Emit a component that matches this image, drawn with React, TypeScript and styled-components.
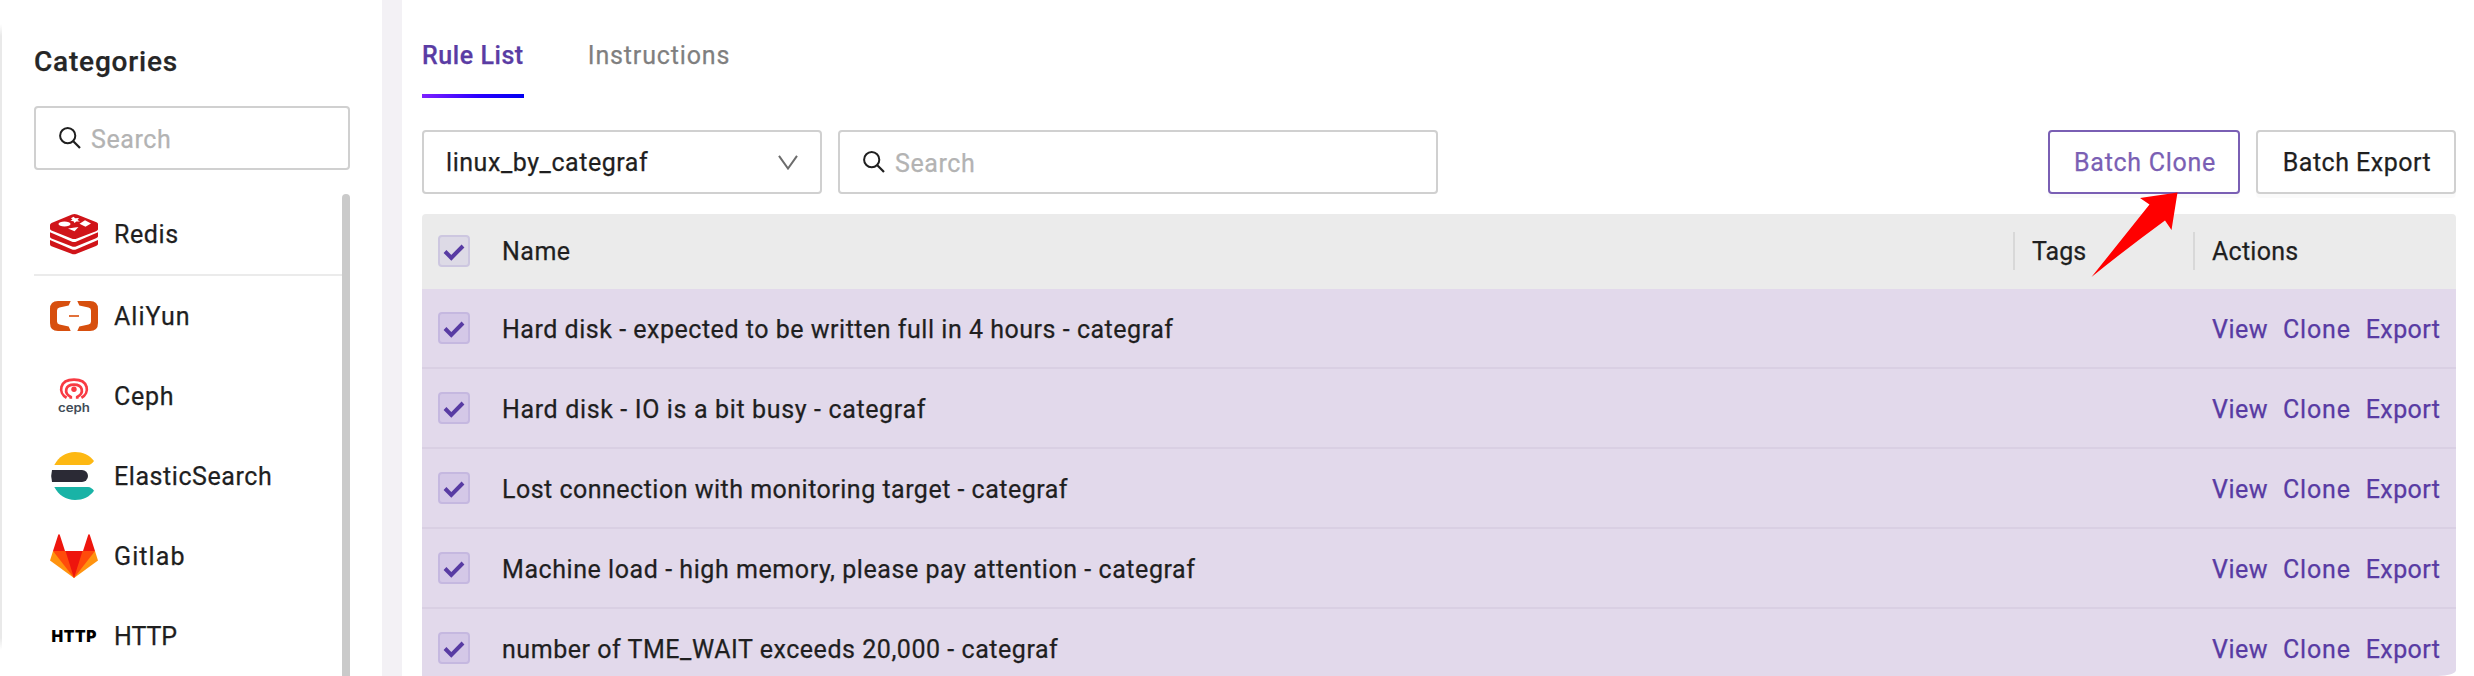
import React from 'react';
import styled, { createGlobalStyle } from 'styled-components';

const Global = createGlobalStyle`
  * { box-sizing: border-box; }
  html, body { margin: 0; background: #fff; }
  body { overflow: hidden; font-family: Roboto, "Liberation Sans", sans-serif; font-size: 25px; line-height: 34px; color: #1f1f1f; }
  svg { display: block; }
`;

const Page = styled.div`
  display: flex;
  height: 676px;
  overflow: hidden;
  background: #fff;
`;

const EdgeLine = styled.div`
  width: 2px;
  height: 626px;
  margin-top: 24px;
  flex: none;
  background: linear-gradient(to bottom, transparent, #e9e9e9 12px, #e9e9e9 calc(100% - 12px), transparent);
`;

const Sidebar = styled.aside`
  width: 380px;
  flex: none;
  padding: 45px 32px 0;
`;

const Gutter = styled.div`
  width: 20px;
  flex: none;
  background: #f3f1f5;
`;

const Text = styled.span<{ $ls?: number }>`
  white-space: pre;
  letter-spacing: ${p => p.$ls ?? 0}px;
  -webkit-text-stroke: 0.25px currentColor;
`;

const Title = styled.h2`
  margin: 0 0 27px;
  font-size: 28px;
  line-height: 34px;
  font-weight: 500;
  color: #262626;
`;

const Field = styled.div<{ $width: number }>`
  display: flex;
  align-items: center;
  gap: 10px;
  width: ${p => p.$width}px;
  height: 64px;
  padding: 3px 20px 0 23px;
  border: 2px solid #d0d0d0;
  border-radius: 4px;
  color: #b3b3b3;
`;

const SearchGlyph = styled.svg`
  width: 22px;
  height: 22px;
  flex: none;
  margin-top: -4px;
`;

const ScrollArea = styled.div`
  display: flex;
  height: 600px;
  margin-top: 24px;
`;

const CategoryList = styled.div`
  flex: 1;
`;

const Thumb = styled.div`
  width: 8px;
  flex: none;
  border-radius: 4px;
  background: #cacaca;
`;

const Category = styled.div<{ $pinned?: boolean }>`
  display: flex;
  align-items: center;
  gap: 16px;
  height: ${p => (p.$pinned ? 82 : 81)}px;
  padding-left: 16px;
  border-bottom: ${p => (p.$pinned ? '2px solid #ebebeb' : 'none')};
  & + & { height: ${p => (p.$pinned ? 82 : 80)}px; }
  svg { width: 48px; height: 48px; flex: none; }
`;

const CategoryName = styled(Text)`
  padding-top: 2px;
`;

const Main = styled.main`
  flex: 1;
  padding: 0 18px 0 20px;
`;

const Tabs = styled.nav`
  display: flex;
  gap: 64px;
  height: 98px;
`;

const Tab = styled.div<{ $active?: boolean }>`
  padding-top: 39px;
  color: ${p => (p.$active ? '#5a3ca4' : '#7f7f7f')};
  font-weight: ${p => (p.$active ? 500 : 400)};
  border-bottom: 4px solid transparent;
  border-image: ${p => (p.$active ? 'linear-gradient(to right, #8022ff, #2a00ff 55%, #0000f0) 1' : 'none')};
`;

const Toolbar = styled.div`
  display: flex;
  gap: 16px;
  margin: 32px 0 20px;
`;

const Select = styled.div`
  display: flex;
  align-items: center;
  justify-content: space-between;
  width: 400px;
  height: 64px;
  padding: 2px 22px 0 22px;
  border: 2px solid #d0d0d0;
  border-radius: 4px;
`;

const Chevron = styled.svg`
  width: 20px;
  height: 15px;
  margin-top: -2px;
`;

const Buttons = styled.div`
  display: flex;
  gap: 16px;
  margin-left: auto;
`;

const Button = styled.div<{ $focus?: boolean; $width: number }>`
  position: relative;
  display: flex;
  align-items: center;
  justify-content: center;
  width: ${p => p.$width}px;
  height: 64px;
  padding: 2px 0 0 2px;
  border: 2px solid ${p => (p.$focus ? '#7a5fb4' : '#d0d0d0')};
  border-radius: 4px;
  color: ${p => (p.$focus ? '#7a5fb4' : '#1f1f1f')};
  background: #fff;
  box-shadow: 0 4px 0 rgba(0, 0, 0, 0.02);
`;

const Arrow = styled.svg`
  position: absolute;
  z-index: 2;
  left: 41px;
  top: 60px;
  width: 88px;
  height: 87px;
`;

const Table = styled.div`
  border-radius: 4px 4px 0 0;
  overflow: hidden;
`;

const Row = styled.div<{ $head?: boolean; $last?: boolean }>`
  display: grid;
  grid-template-columns: 80px 1fr 180px 263px;
  align-items: start;
  height: ${p => (p.$head ? 75 : p.$last ? 67 : 80)}px;
  background: ${p => (p.$head ? '#ebebeb' : '#e2d9eb')};
  border-bottom: ${p => (p.$head || p.$last ? 'none' : '2px solid #d9cfe3')};
  border-bottom-right-radius: ${p => (p.$last ? '18px 6px' : '0')};
`;

const Cell = styled.div<{ $head?: boolean }>`
  padding-top: ${p => (p.$head ? 21 : 24)}px;
`;

const HeadCell = styled.div`
  height: 38px;
  margin-top: 18px;
  padding: 3px 0 0 17px;
  border-left: 2px solid #d8d8d8;
`;

const Actions = styled.div`
  display: flex;
  gap: 15px;
  padding: 24px 0 0 19px;
  color: #583ba3;
`;

const Box = styled.div<{ $head?: boolean }>`
  display: flex;
  align-items: center;
  justify-content: center;
  width: 32px;
  height: 32px;
  margin: ${p => (p.$head ? 21 : 23)}px 0 0 16px;
  border: 2px solid ${p => (p.$head ? '#cdc7e0' : '#c5b8e0')};
  border-radius: 4px;
  background: ${p => (p.$head ? '#dddae6' : '#d4c8e7')};
  svg { width: 22px; height: 18px; margin-top: 1px; }
`;

const Check = ({ head }: { head?: boolean }) => (
  <Box $head={head}>
    <svg viewBox="0 0 22 18"><path d="M2 8.5 8.3 14.8 20 3" fill="none" stroke="#583ba3" strokeWidth="4" /></svg>
  </Box>
);

const Magnifier = () => (
  <SearchGlyph viewBox="0 0 22 22">
    <circle cx="8.7" cy="8.7" r="7.6" fill="none" stroke="#1f1f1f" strokeWidth="2" />
    <path d="M13.8 13.8 21 21" stroke="#1f1f1f" strokeWidth="2.2" />
  </SearchGlyph>
);

const RedisLogo = () => (
  <svg viewBox="0 0 48 48">
    <g fill="#d01419">
      <path d="M0 15Q0 13.6 1.5 12.9L22 4.6Q24.500 3.500 27 4.600L46.500 12.300Q48 13 48 14V19.500Q47.500 20.500 46 21.300L27 28.500Q24 29.500 21.500 28.500L1.500 20.500Q0 19.800 0 18.500Z" />
      <path d="M0 22.300 21.500 31.500Q24 32.500 26.500 31.500L48 22.300V26.500Q47.500 27.500 46 28.200L26.500 36.300Q24 37.300 21.500 36.300L1.500 28.500Q0 27.800 0 26.500Z" />
      <path d="M0 30 21.500 39.200Q24 40.200 26.500 39.200L48 30V34.200Q47.500 35.200 46 36L26.500 43.800Q24 44.800 21.500 43.800L1.500 36.300Q0 35.600 0 34.200Z" />
    </g>
    <g fill="#fff">
      <ellipse cx="14.500" cy="14" rx="6" ry="2.600" />
      <path d="M35 10.200 41 13.400 35.500 16.800 29.500 13.800Z" />
      <path d="M18 18.500 28.500 17 24.500 21.300Z" />
      <path d="M23.500 6.800 25.300 8.300 29 8 27.500 9.900 30 11.600 26.300 11.400 24.500 13 23.500 11.200 20.300 10.700 22.500 9.700 21 8.200Z" />
    </g>
  </svg>
);

const AliYunLogo = () => (
  <svg viewBox="0 0 48 48">
    <path fill="#d74f0e" d="M20.700 9H8Q0 9 0 17V31Q0 39 8 39H20.700L18.700 34.600 9.500 32.500Q7 31.900 7 29.500V18.500Q7 16.100 9.500 15.500L18.700 13.400ZM27.300 9H40Q48 9 48 17V31Q48 39 40 39H27.300L29.300 34.600 38.500 32.500Q41 31.900 41 29.500V18.500Q41 16.100 38.500 15.500L29.300 13.400Z" />
    <path fill="#e2713b" d="M19 23h10v2H19z" />
  </svg>
);

const CephLogo = () => (
  <svg viewBox="0 0 48 48">
    <g fill="none" stroke="#f83b43" strokeWidth="2.700">
      <path d="M16.600 25.800C8 21 9 7.600 24 7.600S40 21 31.400 25.800" />
      <path d="M20.800 26.800V25C13.500 21.200 15 12.600 24 12.600S34.500 21.200 27.200 25V26.800" />
    </g>
    <circle cx="24" cy="17.200" r="2.700" fill="#f83b43" />
    <text x="24" y="39.500" textAnchor="middle" textLength="32" lengthAdjust="spacingAndGlyphs" fontFamily="Inter, sans-serif" fontWeight="600" fontSize="11.500" fill="#424c58">ceph</text>
  </svg>
);

const ElasticLogo = () => (
  <svg viewBox="0 0 48 48">
    <path fill="#fdb813" d="M4.300 13C8.500 5 16 0 25 0 33 0 39.500 3 44 9 42.500 11 40.500 13 38 13Z" />
    <path fill="#2b2a35" d="M2 18H32a6 6 0 0 1 0 12H2Q.400 24 2 18Z" />
    <path fill="#19b3a6" d="M4.300 35H38C40.500 35 42.500 36.800 44 38.800 39.500 45 33 48 25 48 16 48 8.500 43 4.300 35Z" />
  </svg>
);

const GitlabLogo = () => (
  <svg viewBox="0 0 48 48">
    <path fill="#ff930f" d="M3 19 0 28.500 24 46 48 28.500 45 19Z" />
    <path fill="#ff4b0b" d="M3 19H45L24 46Z" />
    <path fill="#ee150d" d="M15.500 19H32.500L24 46ZM9 2Q8.500 2 8 3.500L3 19H15L10 3.500Q9.500 2 9 2ZM39 2Q38.500 2 38 3.500L33 19H45L40 3.500Q39.500 2 39 2Z" />
  </svg>
);

const HttpLogo = () => (
  <svg viewBox="0 0 48 48">
    <text x="1.500" y="29.600" textLength="45" lengthAdjust="spacing" fontFamily="Inter, sans-serif" fontWeight="900" fontSize="15.500" fill="#000">HTTP</text>
  </svg>
);

const categories = [
  { name: 'Redis', ls: 0.6, Logo: RedisLogo, pinned: true },
  { name: 'AliYun', ls: 1, Logo: AliYunLogo },
  { name: 'Ceph', ls: 0.7, Logo: CephLogo },
  { name: 'ElasticSearch', ls: 0.57, Logo: ElasticLogo },
  { name: 'Gitlab', ls: 1.1, Logo: GitlabLogo },
  { name: 'HTTP', ls: -0.1, Logo: HttpLogo },
];

const rules = [
  { name: 'Hard disk - expected to be written full in 4 hours - categraf', ls: 0.52 },
  { name: 'Hard disk - IO is a bit busy - categraf', ls: 0.64 },
  { name: 'Lost connection with monitoring target - categraf', ls: 0.49 },
  { name: 'Machine load - high memory, please pay attention - categraf', ls: 0.56 },
  { name: 'number of TME_WAIT exceeds 20,000 - categraf', ls: 0.54 },
];

export default function App() {
  return (
    <Page>
      <Global />
      <EdgeLine />
      <Sidebar>
        <Title><Text $ls={0.8}>Categories</Text></Title>
        <Field $width={316}><Magnifier /><Text $ls={0.6}>Search</Text></Field>
        <ScrollArea>
          <CategoryList>
            {categories.map(({ name, ls, Logo, pinned }) => (
              <Category key={name} $pinned={pinned}><Logo /><CategoryName $ls={ls}>{name}</CategoryName></Category>
            ))}
          </CategoryList>
          <Thumb />
        </ScrollArea>
      </Sidebar>
      <Gutter />
      <Main>
        <Tabs>
          <Tab $active><Text $ls={0.56}>Rule List</Text></Tab>
          <Tab><Text $ls={0.85}>Instructions</Text></Tab>
        </Tabs>
        <Toolbar>
          <Select>
            <Text $ls={0.55}>linux_by_categraf</Text>
            <Chevron viewBox="0 0 20 15"><path d="M1 .8 10 13.500 19 .8" fill="none" stroke="#6c6c6c" strokeWidth="2" /></Chevron>
          </Select>
          <Field $width={600}><Magnifier /><Text $ls={0.6}>Search</Text></Field>
          <Buttons>
            <Button $focus $width={192}>
              <Text $ls={0.7}>Batch Clone</Text>
              <Arrow viewBox="0 0 88 87">
                <path fill="#ff0000" d="M86.500 .5 49 6 58.500 12.500Q31 47 .5 85Q35 57 74 28.500L80.500 38Z" />
              </Arrow>
            </Button>
            <Button $width={200}><Text $ls={0.5}>Batch Export</Text></Button>
          </Buttons>
        </Toolbar>
        <Table>
          <Row $head>
            <Check head />
            <Cell $head><Text $ls={0.5}>Name</Text></Cell>
            <HeadCell><Text>Tags</Text></HeadCell>
            <HeadCell><Text $ls={0.25}>Actions</Text></HeadCell>
          </Row>
          {rules.map((rule, i) => (
            <Row key={rule.name} $last={i === rules.length - 1}>
              <Check />
              <Cell><Text $ls={rule.ls}>{rule.name}</Text></Cell>
              <span />
              <Actions>
                <Text $ls={0.5}>View</Text>
                <Text $ls={0.8}>Clone</Text>
                <Text $ls={0.4}>Export</Text>
              </Actions>
            </Row>
          ))}
        </Table>
      </Main>
    </Page>
  );
}
